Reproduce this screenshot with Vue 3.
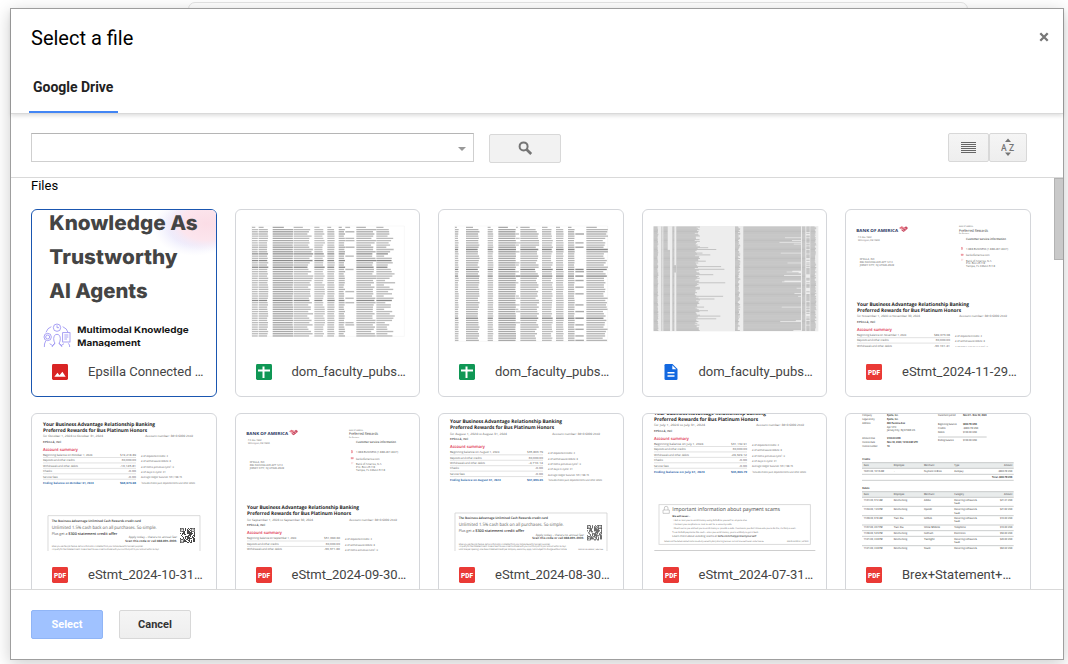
<script setup>
// Small repeatable generator, so the sheet previews are the same on each load.
function seeded(seed) {
  let s = seed
  return () => {
    s = (s * 1664525 + 1013904223) % 4294967296
    return s / 4294967296
  }
}

const t = (x, x2, y, size, text, extra = {}) => ({ x, y, size, text, len: x2 - x, fill: '#5c5c5c', weight: 400, ...extra })

// Columns: [start, end, jitter, density, tone]
function sheet(seed, top, bottom, pitch, columns) {
  const rnd = seeded(seed)
  const out = []
  for (let y = top; y < bottom; y += pitch) {
    const header = y === top
    const bold = !header && rnd() < 0.1
    columns.forEach(([a, b, jitter, density, tone]) => {
      if (rnd() > density) return
      const end = header ? a + (b - a) * 0.55 : b + (rnd() - 0.5) * jitter
      out.push({ x1: a, x2: end, y, stroke: bold ? '#8a8a8a' : tone })
    })
  }
  return out
}

const sheetA = sheet(7, 82, 408, 6.65, [
  [80, 98, 2, 1, '#bdbdbd'], [100, 127, 4, 1, '#b8b8b8'], [142, 203, 2, 1, '#a8a8a8'],
  [205, 255, 18, 1, '#bababa'], [267, 295, 8, 1, '#c0c0c0'], [306, 327, 2, 1, '#bababa'],
  [340, 357, 5, 1, '#b2b2b2'], [360, 386, 3, 0.25, '#bababa'], [393, 445, 16, 1, '#b5b5b5'], [453, 492, 36, 1, '#bababa']
])
const sheetB = sheet(19, 82, 423, 6.65, [
  [75, 85, 2, 1, '#b9b9b9'], [108, 146, 6, 1, '#b2b2b2'], [173, 189, 2, 1, '#bababa'],
  [205, 257, 2, 1, '#a8a8a8'], [258, 268, 8, 0.4, '#c5c5c5'], [271, 322, 14, 1, '#b5b5b5'],
  [336, 366, 6, 1, '#bababa'], [378, 400, 2, 1, '#bababa'], [414, 433, 2, 1, '#b2b2b2'],
  [436, 461, 2, 0.25, '#a9a9a9'], [469, 526, 16, 1, '#b5b5b5']
])

function denseRows() {
  const rnd = seeded(41)
  const rows = []
  for (let y = 81; y < 393; y += 2.7) {
    const add = (a, b) => rows.push({ x1: a, x2: b, y })
    add(55, 66 + rnd() * 3)
    add(78, 81)
    add(84, y > 150 ? 104 : 97)
    add(111, y > 195 && y < 218 ? 122 : 117)
    add(123, 178 + rnd() * 16 + (rnd() < 0.15 ? rnd() * 90 : 0))
    add(299, 307 + rnd() * 8)
    add(324, rnd() < 0.16 ? 430 + rnd() * 60 : 497)
    add(500, 510)
    if (rnd() < 0.7) add(513, 523)
    add(525, 538 + rnd() * 5)
  }
  return rows
}
const sheetC = denseRows()

function statement(month, last, amount, out, ending) {
  const rows = [
    ['Beginning balance on ' + month + ' 1, 2024', amount, 205],
    ['Deposits and other credits', '30,000.00', 152],
    ['Withdrawals and other debits', out, 162]
  ]
  const side = [['# of deposits/credits: 3', 432], ['# of withdrawals/debits: 8', 441], ['# of items-previous cycle¹: 0', 450]]
  if (ending) {
    rows.push(['Checks', '-0.00', 84], ['Service fees', '-0.00', 101])
    side.push(['# of days in cycle: 31', 425], ['Average ledger balance: $51,198.15', 474], ['¹Includes checks paid, deposited items and other debits', 513])
  }
  const list = [
    t(57, 393, 318, 14.5, 'Your Business Advantage Relationship Banking', { weight: 700, fill: '#1c1c1c' }),
    t(57, 369, 335.5, 14.5, 'Preferred Rewards for Bus Platinum Honors', { weight: 700, fill: '#1c1c1c' }),
    t(57, 57 + (month.length * 2 + 26) * 4.5, 352, 9, `for ${month} 1, 2024 to ${month} ${last}, 2024`),
    t(364, 507, 352, 9, 'Account number: 3810 6009 2559'),
    t(57, 112, 368.5, 9, 'EPSILLA, INC', { weight: 600, fill: '#444' }),
    t(57, 162, 393, 12.5, 'Account summary', { weight: 600, fill: '#dc2643' })
  ]
  rows.forEach(([name, value, end], i) => {
    list.push(t(57, end, 408 + i * 16.3, 8.5, name))
    list.push(t(336 - value.length * 4.8, 336, 408 + i * 16.3, 8.5, value))
  })
  side.forEach(([name, end], i) => list.push(t(351, end, 411 + i * 16.2, 8.3, name)))
  if (ending) {
    list.push(t(57, 209, 491, 8.8, `Ending balance on ${month} ${last}, 2024`, { weight: 700, fill: '#2b66a8' }))
    list.push(t(288, 336, 491, 8.8, ending, { weight: 700, fill: '#2b66a8' }))
  }
  return { list, lines: rows.map((_, i) => 413 + i * 16.3) }
}

const letterhead = [
  t(55, 180, 95, 12.5, 'BANK OF AMERICA', { weight: 700, fill: '#26355e' }),
  t(60, 101, 113, 7.5, 'P.O. Box 15284'), t(60, 125, 121.5, 7.5, 'Wilmington, DE 19850'),
  t(65, 110, 180, 8.3, 'EPSILLA, INC'), t(65, 164, 189, 8.3, '660 PAVONIA AVE APT 1213'), t(65, 168, 198, 8.3, 'JERSEY CITY, NJ 07306-2909'),
  t(363, 405, 82, 6.5, 'BANK OF AMERICA'), t(363, 450, 95, 12, 'Preferred Rewards', { fill: '#444' }), t(363, 393, 102.5, 6, 'For Business'),
  t(384, 504, 118.5, 9, 'Customer service information', { weight: 600, fill: '#444' }),
  t(384, 510, 149, 8.8, '1.888.BUSINESS (1.888.287.4637)'), t(384, 455, 168.5, 8.8, 'bankofamerica.com'),
  t(384, 462, 184.5, 8.8, 'Bank of America, N.A.'), t(384, 441, 193, 8.8, 'P.O. Box 25118'), t(384, 471, 202, 8.8, 'Tampa, FL 33622-5118')
]

const offer = [
  t(95, 363, 351, 9.5, 'The Business Advantage Unlimited Cash Rewards credit card', { weight: 600, fill: '#2a2a2a' }),
  t(95, 410, 371, 14, 'Unlimited 1.5% cash back on all purchases. So simple.'),
  t(95, 142, 389, 11.5, 'Plus get a'), t(145, 292, 389, 11.5, '$300 statement credit offer', { weight: 600, fill: '#333' }),
  t(326, 471, 400, 9, 'Apply today – there’s no annual fee!'),
  t(316, 471, 411, 9, 'Scan this code or call 888.895.4909.', { weight: 600, fill: '#2a2a2a' }),
  t(95, 370, 427, 6.8, 'When you use the QRC feature, certain information is collected from your mobile device for business purposes.'),
  t(95, 418, 435, 6.8, 'To qualify for the statement credit, make at least $3,000 in Net Purchases with your card that post to your account within 90 days.')
]
const offerLimit = [
  t(95, 420, 443, 6.8, 'Limit one per opening. One $300 statement credit per company. Bank may apply 1099 subject to change without notice.'),
  t(454, 528, 443, 6.8, 'SSM-02-24-2484.B | 6467356')
]

const scams = [
  t(111, 434, 319, 16, 'Important information about payment scams', { fill: '#444' }),
  t(111, 165, 335, 7.5, 'We will never…', { weight: 700, fill: '#2a2a2a' }),
  t(113, 335, 347, 7.6, '•  Ask or text you to send money using Zelle® to yourself or anyone else'),
  t(113, 289, 359, 7.6, '•  Contact you via phone or text to ask for a security code'),
  t(113, 482, 371, 7.6, '•  Reach out to you and ask you to send money or provide a code. If someone you don’t know asks you to do this, it’s likely a scam.'),
  t(111, 370, 384, 7.6, 'Treat Zelle® payments like cash – once you send money, you’re unlikely to get it back.'),
  t(111, 245, 397, 8.4, 'Learn more about avoiding scams at'), t(247, 363, 397, 8.4, 'bofa.com/helpprotectyourself', { weight: 600, fill: '#444' }),
  t(87, 386, 410, 6.5, 'Zelle® and the Zelle® related marks are wholly owned by Early Warning Services, LLC and are used herein under license.'),
  t(455, 519, 410, 6.5, 'SSM-05-24-0083.B | 6479595')
]

const brex = [
  ['Company', 73, 102, 34], ['Epsilla, Inc.', 147, 181, 34, 1], ['Legal entity', 73, 110, 46], ['Epsilla, Inc.', 147, 181, 46, 1],
  ['Address', 73, 98, 58], ['660 Pavonia Ave', 147, 201, 58, 1], ['Apt 1213', 147, 175, 68], ['Jersey City, NJ 07306 US', 147, 231, 78],
  ['Amount due', 73, 111, 103], ['$100.00 USD', 147, 188, 103, 1], ['Invoice date', 73, 111, 115], ['Nov 30, 2024, 12:00 AM UTC', 147, 240, 115, 1],
  ['Invoice number', 73, 119, 127], ['10', 147, 155, 127, 1],
  ['Statement period', 300, 353, 34], ['Nov 01 - Nov 30, 2024', 375, 446, 34, 1],
  ['Beginning balance', 300, 356, 60], ['$800.78 USD', 375, 417, 60, 1], ['Credits', 300, 323, 72], ['-$800.78 USD', 375, 421, 72],
  ['Debits', 300, 320, 83], ['$100.00 USD', 375, 417, 83], ['Ending balance', 300, 347, 108], ['$100.00 USD', 375, 417, 108],
  ['Credits', 73, 96, 166, 1], ['Date', 77, 92, 184], ['Employee', 167, 199, 184], ['Merchant', 258, 289, 184], ['Type', 349, 364, 184], ['Amount', 498, 523, 184],
  ['10/01/24, 10:16 AM', 77, 138, 202], ['-', 168, 170, 202], ['Payment to Brex', 258, 311, 202], ['Autopay', 349, 376, 202], ['-$800.78 USD', 480, 523, 202],
  ['Total -$800.78 USD', 462, 523, 219, 1],
  ['Debits', 73, 94, 253, 1], ['Date', 77, 92, 271], ['Employee', 167, 199, 271], ['Merchant', 258, 289, 271], ['Category', 349, 378, 271], ['Amount', 498, 523, 271]
].map(([text, a, b, y, bold]) => t(a, b, y, 8.2, text, { weight: bold ? 700 : 600, fill: bold ? '#333' : '#5e5e5e' }))

const debits = [
  [288, '11/01/24, 9:12 AM', 'Renchu Song', 'Adobe', '$21.31 USD', 1], [316, '11/04/24, 1:20 PM', 'Renchu Song', 'OpenAI', '$21.62 USD', 1],
  [342, '11/06/24, 6:18 AM', 'Tian Xia', 'GitHub', '$10.00 USD', 1], [370, '11/07/24, 4:07 PM', 'Tian Xia', 'Uline Mobile', '$10.00 USD', 0],
  [388, '11/08/24, 5:45 PM', 'Renchu Song', 'FedCash', '$50.00 USD', 0], [405, '11/21/24, 3:38 PM', 'Renchu Song', 'Twilight', '$20.00 USD', 1],
  [432, '11/21/24, 3:38 PM', 'Renchu Song', 'Slack', '$62.02 USD', 0]
]
debits.forEach(([y, date, who, shop, sum, two], i) => {
  const cell = { weight: 600, fill: '#5e5e5e' }
  brex.push(t(77, 134, y, 8.2, date, cell), t(167, 167 + who.length * 3.7, y, 8.2, who, cell), t(258, 258 + shop.length * 4, y, 8.2, shop, cell), t(486, 523, y, 8.2, sum, cell))
  if (i === 3 || i === 4) brex.push(t(349, 383, y, 8.2, i === 3 ? 'Telephone' : 'Electronics', cell))
  else brex.push(t(349, 417, y, 8.2, 'Recurring software &', cell))
  if (two) brex.push(t(349, 366, y + 10, 8.2, 'SaaS', cell))
})
const brexLines = [173, 190, 208, 226, 260, 277, 304, 332, 360, 377, 394, 422]

const rndQr = seeded(99)
const qr = []
for (let r = 0; r < 15; r++) for (let c = 0; c < 15; c++) if (rndQr() > 0.46) qr.push([480 + c * 3, 369 + r * 3])
const finders = [[480, 369], [514, 369], [480, 403]]

const files = [
  { name: 'Epsilla Connected …', icon: 'image', kind: 'poster', dx: -33, dy: -27, selected: true },
  { name: 'dom_faculty_pubs…', icon: 'sheet', kind: 'sheet', rows: sheetA, grid: [79, 537, 78, 409], dx: -29, dy: -27 },
  { name: 'dom_faculty_pubs…', icon: 'sheet', kind: 'sheet', rows: sheetB, grid: [74, 533, 78, 424], dx: -24, dy: -27 },
  { name: 'dom_faculty_pubs…', icon: 'doc', kind: 'dense', rows: sheetC, dx: -20, dy: -27 },
  { name: 'eStmt_2024-11-29…', icon: 'pdf', kind: 'bank', head: true, st: statement('November', 30, '$89,073.08', '-30,101.41'), dx: -21, dy: -27 },
  { name: 'eStmt_2024-10-31…', icon: 'pdf', kind: 'bank', box: 'offer', notes: offer, bx: -33, by: -24, st: statement('October', 31, '$19,218.89', '-10,145.81', '$68,073.08'), dx: -21, dy: -279.5 },
  { name: 'eStmt_2024-09-30…', icon: 'pdf', kind: 'bank', head: true, st: statement('September', 30, '$51,090.60', '-30,371.60'), dx: -21, dy: -29 },
  { name: 'eStmt_2024-08-30…', icon: 'pdf', kind: 'bank', box: 'offer', notes: [...offer, ...offerLimit], bx: -33, by: -32, st: statement('August', 31, '$35,803.79', '-4,710.14', '$31,093.65'), dx: -21, dy: -287.5 },
  { name: 'eStmt_2024-07-31…', icon: 'pdf', kind: 'bank', box: 'scams', bx: -20, by: -24, st: statement('July', 31, '$31,132.91', '-26,329.12', '$35,803.79'), dx: -21, dy: -312.5 },
  { name: 'Brex+Statement+…', icon: 'pdf', kind: 'brex', dx: -21, dy: -24 }
]
</script>

<template>
  <div class="page">
    <div class="behind"></div>
    <section class="dialog">
      <header class="head">
        <div class="title-row">
          <h1>Select a file</h1>
          <svg class="close" width="10" height="10" viewBox="0 0 10 10"><path d="M1.3 1.3L8.7 8.7M8.7 1.3L1.3 8.7" /></svg>
        </div>
        <nav><span class="tab">Google Drive</span></nav>
      </header>

      <div class="toolbar">
        <div class="field"><i class="caret"></i></div>
        <button class="btn search">
          <svg width="15" height="15" viewBox="0 0 15 15"><circle cx="5.6" cy="5.4" r="4" /><path d="M8.600 8.500L13.200 13" /></svg>
        </button>
        <div class="views">
          <button class="btn list">
            <svg width="15" height="12" viewBox="0 0 15 12"><path d="M0 .5H15M0 2.5H15M0 4.5H15M0 6.5H15M0 8.5H15M0 10.5H15" /></svg>
          </button>
          <button class="btn sort">
            <svg width="14" height="19" viewBox="0 0 14 19">
              <path d="M4 4L7 0.500L10 4ZM4 14.500L7 18L10 14.500Z" /><text x="0" y="12.500">A</text><text x="8" y="12.500">Z</text>
            </svg>
          </button>
        </div>
      </div>

      <main class="scroller">
        <div class="content">
          <h2>Files</h2>
          <div class="grid">
            <article v-for="(f, i) in files" :key="i" class="card" :class="{ selected: f.selected }">
              <svg class="thumb" viewBox="0 0 556.5 414" preserveAspectRatio="xMinYMin slice">
                <g :transform="`translate(${f.dx} ${f.dy})`">
                  <g v-if="f.kind === 'poster'">
                    <defs>
                      <radialGradient id="pink"><stop offset="0" stop-color="#fbdde6" /><stop offset=".6" stop-color="#fce5ed" /><stop offset="1" stop-color="#f6f0fb" stop-opacity="0" /></radialGradient>
                      <radialGradient id="lilac"><stop offset="0" stop-color="#e2e1fb" /><stop offset=".6" stop-color="#ecebfc" /><stop offset="1" stop-color="#f4f3fd" stop-opacity="0" /></radialGradient>
                    </defs>
                    <ellipse cx="525" cy="80" rx="128" ry="88" fill="url(#lilac)" />
                    <ellipse cx="560" cy="70" rx="130" ry="84" fill="url(#pink)" />
                    <g class="poster-title">
                      <text x="88" y="90" textLength="445" lengthAdjust="spacingAndGlyphs">Knowledge As</text>
                      <text x="88" y="193" textLength="385" lengthAdjust="spacingAndGlyphs">Trustworthy</text>
                      <text x="88" y="295" textLength="295" lengthAdjust="spacingAndGlyphs">AI Agents</text>
                    </g>
                    <g class="poster-sub">
                      <text x="172" y="397.500" textLength="334" lengthAdjust="spacingAndGlyphs">Multimodal Knowledge</text>
                      <text x="172" y="439" textLength="190" lengthAdjust="spacingAndGlyphs">Management</text>
                    </g>
                    <g class="people">
                      <circle cx="111" cy="383" r="11" /><path d="M111 376V383H117M78 397Q82 384 94 380M128 380Q141 385 144 397" />
                      <circle cx="83" cy="411" r="11" /><circle cx="83" cy="411" r="6" /><rect x="128" y="398" width="22" height="28" />
                      <path d="M133 405H145M133 411H145M133 417H141M89 431L98 437L105 430M132 431L123 437L117 430M77 423Q72 431 73 443M96 441Q98 434 105 430Q101 424 101 416Q102 403 111 403Q120 403 121 416Q121 424 117 430Q124 434 126 441M149 441Q150 435 145 430" />
                    </g>
                  </g>

                  <g v-else-if="f.kind === 'sheet'">
                    <path class="sheet-frame" :d="`M${f.grid[0]} ${f.grid[2]}H${f.grid[1]}V${f.grid[3]}H${f.grid[0]}Z`" />
                    <line v-for="(r, k) in f.rows" :key="k" class="cell" :x1="r.x1" :x2="r.x2" :y1="r.y" :y2="r.y" :stroke="r.stroke" />
                  </g>

                  <g v-else-if="f.kind === 'dense'">
                    <rect x="54" y="78" width="495" height="316" fill="#ededed" />
                    <line v-for="(r, k) in f.rows" :key="k" class="dense" :x1="r.x1" :x2="r.x2" :y1="r.y" :y2="r.y" />
                  </g>

                  <g v-else-if="f.kind === 'bank'">
                    <g v-if="f.head">
                      <text v-for="(s, k) in letterhead" :key="k" :x="s.x" :y="s.y" :font-size="s.size" :font-weight="s.weight" :fill="s.fill" :textLength="s.len" lengthAdjust="spacingAndGlyphs">{{ s.text }}</text>
                      <path d="M183 84L191 79L209 86L199 94Z" fill="#e26a79" /><path d="M190 91L204 79L210 84L197 96Z" fill="#c94a62" />
                      <path d="M188 85L199 92M194 82L205 88" stroke="#fff" stroke-width="1.5" />
                      <g class="contact"><rect x="370" y="142" width="4" height="7" /><rect x="369" y="162" width="7" height="5" /><path d="M369 178H376M369 181H374" /></g>
                    </g>
                    <text v-for="(s, k) in f.st.list" :key="'s' + k" :x="s.x" :y="s.y" :font-size="s.size" :font-weight="s.weight" :fill="s.fill" :textLength="s.len" lengthAdjust="spacingAndGlyphs">{{ s.text }}</text>
                    <path v-for="y in f.st.lines" :key="y" class="rule" :d="`M57 ${y}H336`" />
                  </g>

                  <g v-else>
                    <rect x="72" y="173" width="455" height="17" fill="#e9ecec" /><rect x="72" y="260" width="455" height="17" fill="#e9ecec" />
                    <path v-for="y in brexLines" :key="y" class="brex-rule" :d="`M72 ${y}H527`" />
                    <path class="brex-rule" d="M300 96H446" />
                    <text v-for="(s, k) in brex" :key="'b' + k" :x="s.x" :y="s.y" :font-size="s.size" :font-weight="s.weight" :fill="s.fill" :textLength="s.len" lengthAdjust="spacingAndGlyphs">{{ s.text }}</text>
                  </g>
                </g>

                <g v-if="f.box" :transform="`translate(${f.bx} ${f.by})`">
                  <template v-if="f.box === 'offer'">
                    <path class="box" d="M84 450V332H540V450" />
                    <text v-for="(s, k) in f.notes" :key="k" :x="s.x" :y="s.y" :font-size="s.size" :font-weight="s.weight" :fill="s.fill" :textLength="s.len" lengthAdjust="spacingAndGlyphs">{{ s.text }}</text>
                    <rect v-for="(q, k) in qr" :key="'q' + k" :x="q[0]" :y="q[1]" width="3" height="3" fill="#444" />
                    <g v-for="(q, k) in finders" :key="'f' + k"><rect class="finder" :x="q[0] + 1" :y="q[1] + 1" width="9" height="9" /><rect :x="q[0] + 4" :y="q[1] + 4" width="3" height="3" fill="#444" /></g>
                  </template>
                  <template v-else>
                    <rect class="box" x="71" y="299" width="454" height="119" />
                    <path class="lock" d="M83 315H102V325H83ZM87 315V309Q87 304 92.500 304Q98 304 98 309V315" />
                    <text v-for="(s, k) in scams" :key="k" :x="s.x" :y="s.y" :font-size="s.size" :font-weight="s.weight" :fill="s.fill" :textLength="s.len" lengthAdjust="spacingAndGlyphs">{{ s.text }}</text>
                    <path class="page-end" d="M57 436.500H540" />
                  </template>
                </g>
              </svg>

              <div class="caption">
                <svg v-if="f.icon === 'image'" class="type" viewBox="0 0 16 16"><rect width="16" height="16" rx="1.400" fill="#d92424" /><path d="M2.300 12.700L5.500 8.800L7.500 11.200L10.400 7.700L13.700 12.700Z" fill="#fff" /></svg>
                <svg v-else-if="f.icon === 'sheet'" class="type" viewBox="0 0 16 16"><rect width="16" height="16" rx="1.400" fill="#0f9755" /><path d="M2 5.500H14V7.500H8.500V14H6.500V7.500H2ZM6.500 2.500H8.500V5.500H6.500Z" fill="#fff" /></svg>
                <svg v-else-if="f.icon === 'doc'" class="type" viewBox="0 0 16 16"><path d="M2.800 0H9.500L14.500 5V14.700Q14.500 16 13.200 16H2.800Q1.500 16 1.500 14.700V1.300Q1.500 0 2.800 0Z" fill="#1268e0" /><path d="M9.300 1.200V5.200H13.300Z" fill="#fff" /><path d="M4.500 8.700H11.500M4.500 11.900H11.500" stroke="#fff" stroke-width="1.500" /></svg>
                <svg v-else class="type" viewBox="0 0 16 16"><rect width="16" height="16" rx="1.400" fill="#ea3a36" /><text x="2" y="10.600" class="pdf" textLength="12" lengthAdjust="spacingAndGlyphs">PDF</text></svg>
                <span>{{ f.name }}</span>
              </div>
            </article>
          </div>
        </div>
        <div class="bar"></div>
      </main>

      <footer>
        <button class="btn select">Select</button>
        <button class="btn cancel">Cancel</button>
      </footer>
    </section>
  </div>
</template>

<style>
html, body { margin: 0; overflow: hidden; }
</style>

<style scoped>
* { box-sizing: border-box; }
.page { position: relative; width: 1068px; height: 664px; padding: 8px 0 0 10px; background: #fff; overflow: hidden; font-family: Roboto, "Liberation Sans", sans-serif; }
.behind { position: absolute; left: 188px; top: 2px; width: 780px; height: 40px; border: 1px solid #e4e4e4; border-radius: 7px; }
.dialog { position: relative; display: flex; flex-direction: column; width: 1054px; height: 652px; border: 1px solid #9f9f9f; background: #fff; box-shadow: 0 4px 16px rgba(0, 0, 0, .2); }
.head { position: relative; z-index: 1; flex: none; height: 105px; border-bottom: 1px solid #d9d9d9; background: #fff; box-shadow: 0 2px 4px rgba(0, 0, 0, .13); }
.title-row { display: flex; justify-content: space-between; align-items: center; height: 57px; padding: 0 14px 0 20px; }
h1 { margin: 1px 0 0; font-size: 20px; font-weight: 400; line-height: 24px; color: #000; }
.close { margin-bottom: 2px; }
.close path { fill: none; stroke: #777; stroke-width: 2.3; }
nav { display: flex; padding-left: 18px; }
.tab { width: 89px; height: 47px; padding: 12px 0 0 4px; border-bottom: 2px solid #4285f4; color: #222; font-size: 14px; font-weight: 700; line-height: 18px; letter-spacing: -.02px; white-space: nowrap; }
.toolbar { display: flex; flex: none; height: 64px; padding: 19px 36px 0 20px; border-bottom: 1px solid #d9d9d9; }
.field { display: flex; justify-content: flex-end; width: 443px; height: 29px; padding: 13px 7px 0 0; border: 1px solid #cfcfcf; border-top-color: #b5b5b5; }
.caret { width: 0; height: 0; border: 4px solid transparent; border-top-color: #999; border-bottom: 0; }
.btn { display: flex; align-items: center; justify-content: center; height: 29px; padding: 0; border: 1px solid #d8d8d8; border-radius: 2px; background: linear-gradient(#f5f5f5, #eee); font: 700 11px Roboto, sans-serif; }
.search { width: 72px; margin: 1px 0 0 15px; background: #f2f2f2; }
.search svg { fill: none; stroke: #757575; stroke-width: 2; }
.search path { stroke-width: 2.700; }
.views { display: flex; margin-left: auto; }
.list { width: 41px; }
.list path { stroke: #666; stroke-width: 1; }
.sort { width: 38px; }
.sort svg { margin-bottom: 1px; fill: #757575; font: 500 8.500px Roboto, sans-serif; }
.scroller { display: flex; flex: none; height: 411px; overflow: hidden; }
.content { flex: 1; padding-left: 20px; }
h2 { margin: 0; height: 31px; font-size: 13px; font-weight: 400; line-height: 15px; color: #000; }
.grid { display: grid; grid-template-columns: repeat(5, 185.500px); gap: 16px 18px; }
.card { height: 188px; border: 1px solid #d4d6da; border-radius: 6px; overflow: hidden; }
.card.selected { border-color: #1a56b0; }
.thumb { display: block; width: 185.500px; height: 138px; margin: -1px 0 0 -1px; font-family: "Open Sans", "Noto Sans", sans-serif; text-rendering: geometricPrecision; }
.caption { display: flex; align-items: center; height: 16px; margin-top: 17px; padding-left: 20px; color: #444; }
.card:nth-child(n + 6) .caption { margin-top: 16px; }
.type { flex: none; width: 16px; height: 16px; margin-right: 20px; }
.caption span { font-size: 13px; line-height: 16px; white-space: nowrap; }
.pdf { fill: #fff; font: 900 6.500px Roboto, sans-serif; }
.poster-title { fill: #444; font: 800 61px Inter, sans-serif; }
.poster-sub { fill: #151515; font: 700 27px Inter, sans-serif; }
.people { fill: none; stroke: #8f86f0; stroke-width: 2.300; }
.sheet-frame { fill: none; stroke: #f0f0f0; stroke-width: 1.500; }
.cell { stroke-width: 4; }
.dense { stroke: #b4b4b4; stroke-width: 2.200; }
.contact { fill: #ee9aa2; stroke: #ee9aa2; stroke-width: 1; }
.rule { stroke: #c4c4c4; stroke-width: 1.500; }
.brex-rule { stroke: #b0b3b3; stroke-width: 2; }
.box { fill: none; stroke: #d3d3d3; stroke-width: 2.500; }
.finder { fill: #fff; stroke: #444; stroke-width: 2; }
.lock { fill: none; stroke: #999; stroke-width: 1.500; }
.page-end { stroke: #c4c4c4; stroke-width: 2.500; }
.bar { width: 9px; height: 82px; border: 1px solid #b3b3b3; border-right: 0; background: #c9c9c9; }
footer { display: flex; gap: 16px; flex: 1; padding: 20px 20px 0; border-top: 1px solid #d9d9d9; }
.select { width: 72px; border-color: #90b5f6; background: #a0c2ff; color: #fff; }
.cancel { width: 72px; color: #333; }
</style>
